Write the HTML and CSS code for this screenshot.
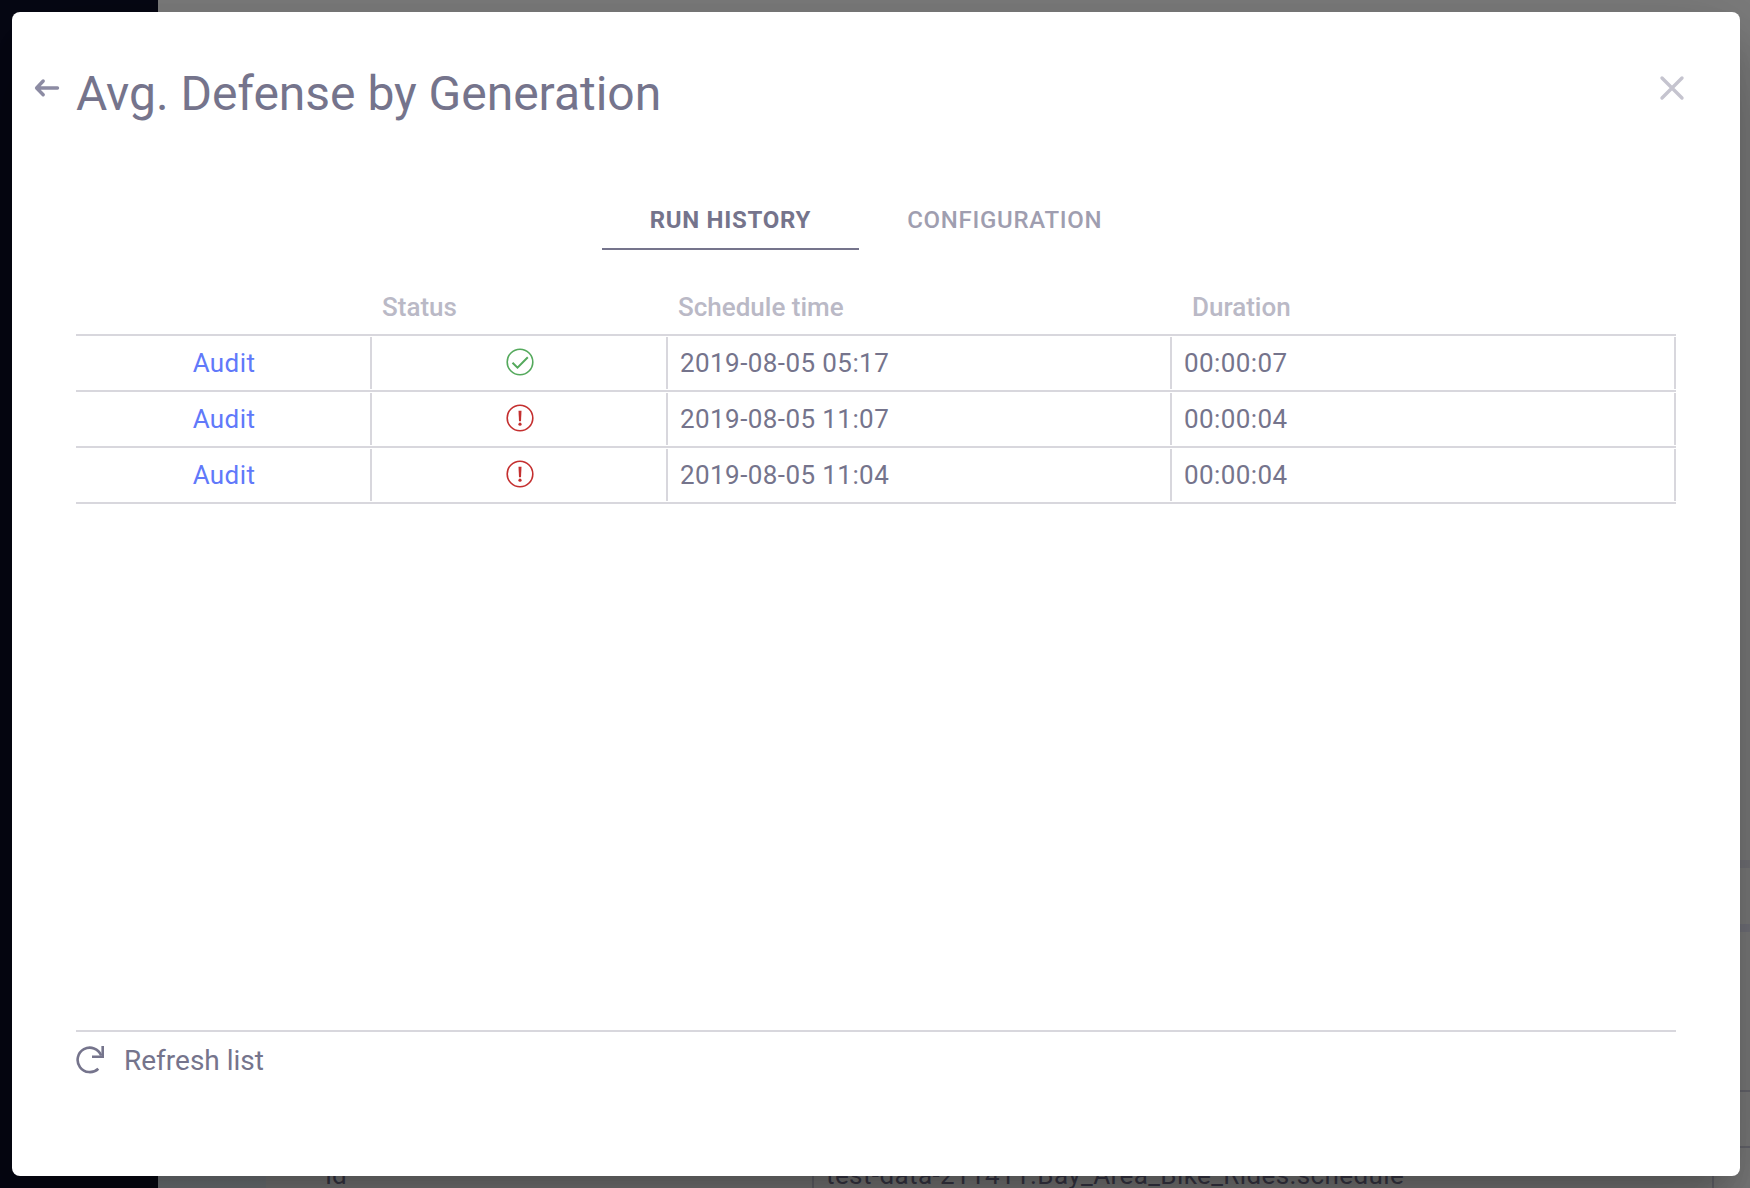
FILE: index.html
```html
<!DOCTYPE html>
<html lang="en">
<head>
<meta charset="utf-8">
<title>Avg. Defense by Generation</title>
<link rel="stylesheet" href="styles.css">
</head>
<body>
<div class="app">
  <div class="sidebar"></div>
  <div class="gutter"></div>
  <div class="page">
    <div class="section section-top"></div>
    <div class="section section-mid"></div>
    <div class="section section-low"></div>
    <div class="section row-line"></div>
    <div class="section property">
      <div class="property-name">Id</div>
      <div class="property-value">test-data-211411.Bay_Area_Bike_Rides.schedule</div>
    </div>
  </div>
</div>
<div class="overlay">
  <div class="dialog">
    <header class="header">
      <svg class="back" width="26" height="20" viewBox="0 0 26 20" fill="none" stroke="#8c8ba3" stroke-width="3.4" stroke-linecap="round" stroke-linejoin="round"><path d="M23.5 10H3M9.2 3L2.6 10l6.6 6.8"/></svg>
      <h1 class="title">Avg. Defense by Generation</h1>
      <svg class="close" width="26" height="26" viewBox="0 0 26 26" fill="none" stroke="#c5c4cf" stroke-width="3.4" stroke-linecap="round"><path d="M3 3l20 20M23 3L3 23"/></svg>
    </header>
    <nav class="tabs">
      <div class="tab active">RUN HISTORY</div>
      <div class="tab">CONFIGURATION</div>
    </nav>
    <div class="table">
      <div class="row head"><div></div><div>Status</div><div>Schedule time</div><div class="head-duration">Duration</div></div>
      <div class="row">
        <div class="cell center link">Audit</div>
        <div class="cell center"><svg class="icon" viewBox="0 0 28 28" fill="none" stroke="#54a95c"><circle cx="14" cy="14" r="12.8" stroke-width="1.6"/><path d="M6.5 14.7l5 4.9L21.8 9.2" stroke-width="2"/></svg></div>
        <div class="cell">2019-08-05 05:17</div>
        <div class="cell">00:00:07</div>
      </div>
      <div class="row">
        <div class="cell center link">Audit</div>
        <div class="cell center"><svg class="icon" viewBox="0 0 28 28"><circle cx="14" cy="14" r="12.8" fill="none" stroke="#c42f2f" stroke-width="1.6"/><path d="M12.5 6.7h3l-.5 10.6h-2z" fill="#c42f2f"/><circle cx="14" cy="20.2" r="1.6" fill="#c42f2f"/></svg></div>
        <div class="cell">2019-08-05 11:07</div>
        <div class="cell">00:00:04</div>
      </div>
      <div class="row">
        <div class="cell center link">Audit</div>
        <div class="cell center"><svg class="icon" viewBox="0 0 28 28"><circle cx="14" cy="14" r="12.8" fill="none" stroke="#c42f2f" stroke-width="1.6"/><path d="M12.5 6.7h3l-.5 10.6h-2z" fill="#c42f2f"/><circle cx="14" cy="20.2" r="1.6" fill="#c42f2f"/></svg></div>
        <div class="cell">2019-08-05 11:04</div>
        <div class="cell">00:00:04</div>
      </div>
    </div>
    <footer class="footer">
      <svg class="refresh" width="28" height="28" viewBox="0 0 28 28" fill="none" stroke="#75748c" stroke-width="2.6"><path d="M22.3 22.7A12.2 12.2 0 1 1 25.2 9.5"/><path d="M26.7 0v10.7H16"/></svg>
      <span>Refresh list</span>
    </footer>
  </div>
</div>
</body>
</html>
```

FILE: styles.css
```css
* { box-sizing: border-box; }

body {
  margin: 0;
  width: 1750px;
  height: 1188px;
  overflow: hidden;
  font-family: Roboto, "Liberation Sans", sans-serif;
  color: #75748c;
  display: grid;
}

.app, .overlay { grid-area: 1 / 1; height: 1188px; min-width: 0; }

/* Dimmed application behind the dialog */
.app { display: flex; background: #7d7d7d; }
.sidebar { width: 158px; background: #070814; }
.gutter { width: 108px; background: linear-gradient(#7d7d7d 70%, #777b7f); }
.page { flex: 1; display: flex; flex-direction: column; overflow: hidden; }
.section { flex: none; }
.section-top { height: 868px; border-bottom: 8px solid #747479; }
.section-mid { height: 64px; border-bottom: 8px solid #74747c; }
.section-low { height: 160px; border-bottom: 2px solid #68686f; }
.row-line { height: 56px; border-bottom: 2px solid #68686f; }
.property {
  display: flex;
  height: 56px;
  font-size: 26px;
  line-height: 54px;
  color: #3a3948;
}
.property-name { width: 546px; padding-left: 59px; }
.property-value {
  width: 902px;
  padding-left: 12px;
  border: solid #68686f;
  border-width: 0 2px;
  letter-spacing: .4px;
}

.overlay { padding: 12px 10px 12px 12px; }
.dialog {
  height: 100%;
  display: flex;
  flex-direction: column;
  padding: 48px 64px 84px;
  border-radius: 8px;
  background: #fff;
  box-shadow: 0 22px 30px -14px rgba(0,0,0,.2), 0 48px 76px 6px rgba(0,0,0,.14), 0 18px 92px 16px rgba(0,0,0,.12);
}

.header {
  display: flex;
  align-items: flex-start;
  height: 134px;
  margin: 0 -9px 0 -42px;
}
.back { margin: 17.5px 16px 0 0; }
.title {
  flex: 1;
  margin: 4px 0 0;
  font-size: 48px;
  font-weight: 400;
  line-height: 60px;
  letter-spacing: -.03px;
}
.close { margin: 15px 0 0; }

.tabs { display: flex; justify-content: center; height: 56px; }
.tab {
  padding: 12px 48px 0;
  font-size: 24px;
  font-weight: 500;
  line-height: 28px;
  letter-spacing: .72px;
  color: #9f9eb0;
}
.tab.active { font-weight: 700; color: #75748c; border-bottom: 2px solid #75748c; }

.table { margin-top: 28px; }
.row {
  display: grid;
  grid-template-columns: 296px 296px 504px 504px;
  height: 56px;
  padding: 1px 0;
  border-bottom: 2px solid #d8d7dd;
  font-size: 26px;
  line-height: 52px;
}
.head {
  height: 58px;
  font-weight: 500;
  line-height: 56px;
  color: #bab9c6;
}
.head div { padding-left: 10px; }
.head .head-duration { padding-left: 20px; }
.cell { padding-left: 12px; border-right: 2px solid #d8d7dd; letter-spacing: .42px; }
.center { padding-left: 2px; display: flex; justify-content: center; }
.link { color: #6179fa; }
.icon { width: 28px; height: 28px; margin-top: 10.5px; }

.footer {
  display: flex;
  gap: 20px;
  height: 62px;
  margin-top: auto;
  padding-top: 13px;
  border-top: 2px solid #d8d7dd;
  font-size: 28px;
  line-height: 32px;
}
.refresh { margin-top: 1px; }
```
